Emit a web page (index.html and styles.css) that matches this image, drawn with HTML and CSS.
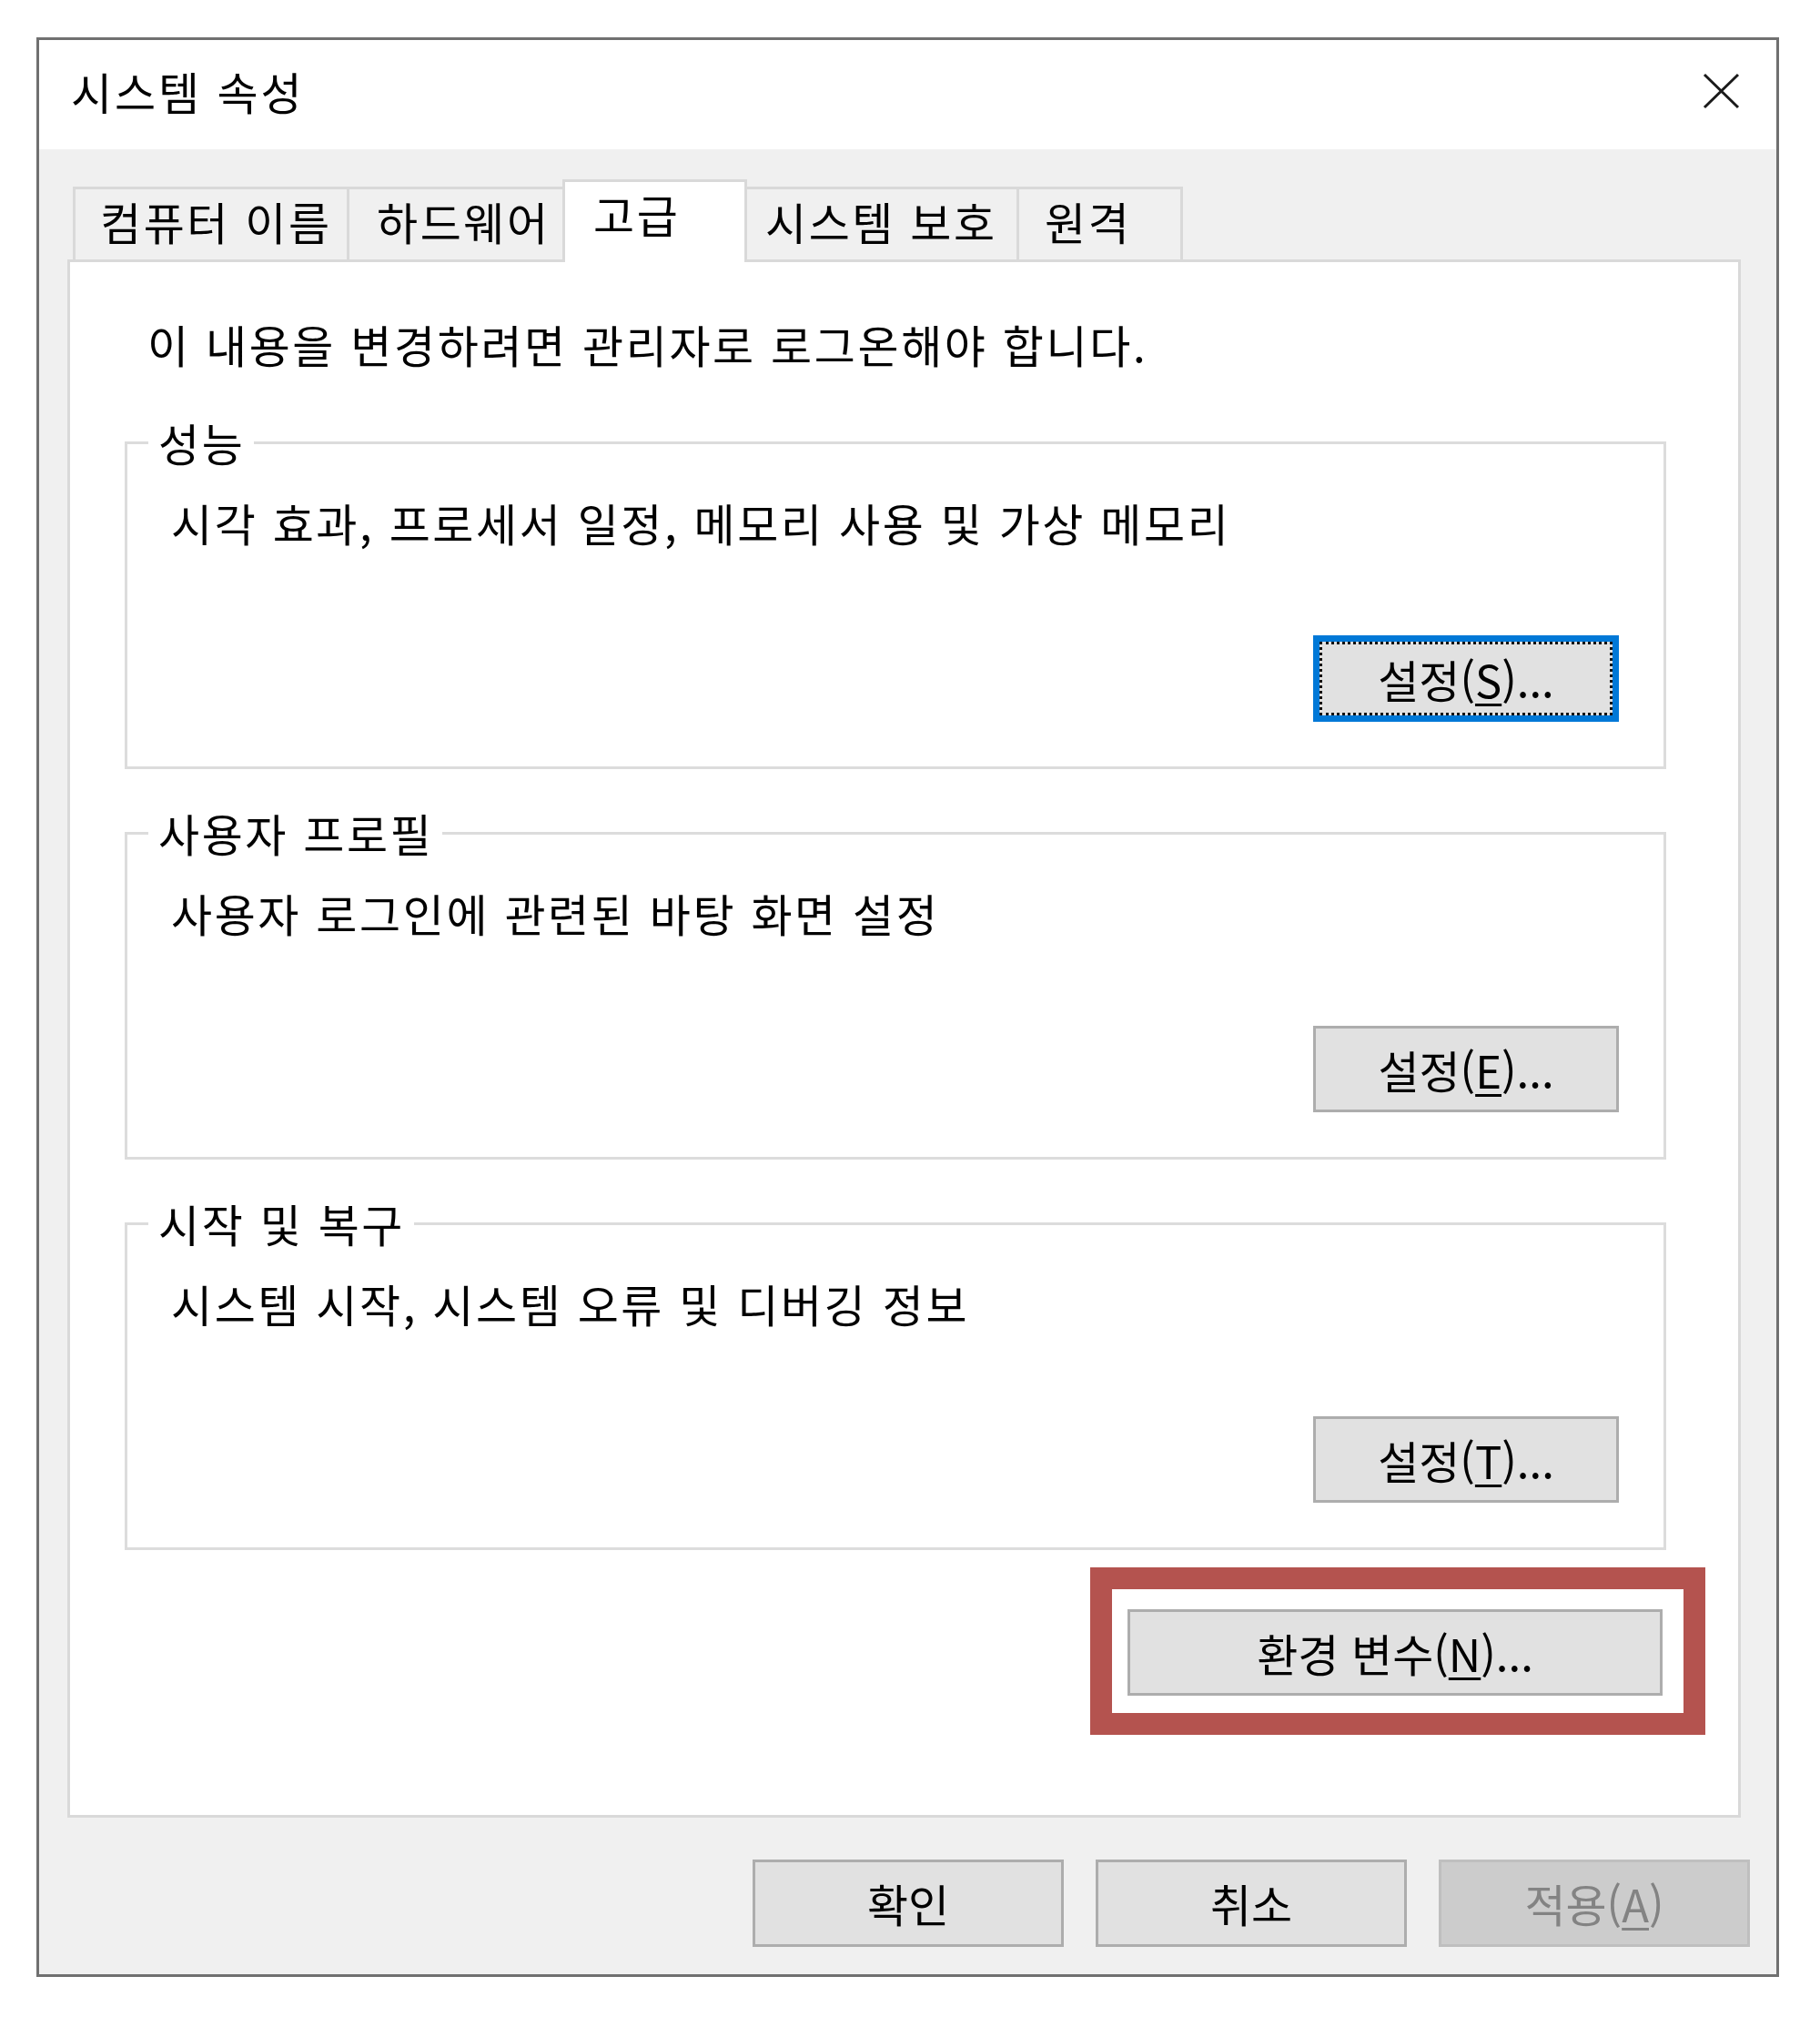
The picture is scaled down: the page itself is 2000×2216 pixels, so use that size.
FILE: index.html
```html
<!DOCTYPE html>
<html lang="ko">
  <head>
    <meta charset="UTF-8" />
    <meta name="viewport" content="width=device-width, initial-scale=1.0" />
    <title>시스템 속성</title>
    <link rel="stylesheet" href="styles.css">
  </head>
  <body>
    <div class="window">
      <div class="titlebar">
        <span class="title">시스템 속성</span>
        <svg class="close" width="41" height="40" viewBox="0 0 41 40">
          <path d="M2 2 L39 38 M39 2 L2 38" stroke="#1a1a1a" stroke-width="3" fill="none" />
        </svg>
      </div>
      <div class="body">
        <div class="tabs">
          <div class="tab t1">컴퓨터 이름</div>
          <div class="tab t2">하드웨어</div>
          <div class="tab t3 active">고급</div>
          <div class="tab t4">시스템 보호</div>
          <div class="tab t5">원격</div>
        </div>
        <div class="panel">
          <p class="notice">이 내용을 변경하려면 관리자로 로그온해야 합니다.</p>
          <fieldset class="group">
            <legend>성능</legend>
            <p class="desc">시각 효과, 프로세서 일정, 메모리 사용 및 가상 메모리</p>
            <div class="actions">
              <button class="btn focused">설정(<u>S</u>)...</button>
            </div>
          </fieldset>
          <fieldset class="group">
            <legend>사용자 프로필</legend>
            <p class="desc">사용자 로그인에 관련된 바탕 화면 설정</p>
            <div class="actions">
              <button class="btn">설정(<u>E</u>)...</button>
            </div>
          </fieldset>
          <fieldset class="group">
            <legend>시작 및 복구</legend>
            <p class="desc">시스템 시작, 시스템 오류 및 디버깅 정보</p>
            <div class="actions">
              <button class="btn">설정(<u>T</u>)...</button>
            </div>
          </fieldset>
          <div class="env-row">
            <div class="highlight">
              <button class="btn wide">환경 변수(<u>N</u>)...</button>
            </div>
          </div>
        </div>
        <div class="footer">
          <button class="btn">확인</button>
          <button class="btn">취소</button>
          <button class="btn" disabled>적용(<u>A</u>)</button>
        </div>
      </div>
    </div>
  </body>
</html>
```

FILE: styles.css
```css
* {
  padding: 0;
  margin: 0;
  box-sizing: border-box;
}
body {
  background: #fff;
  font-family: "Noto Sans CJK KR", "Malgun Gothic", sans-serif;
  font-size: 49px;
  line-height: 60px;
  letter-spacing: 2.6px;
  color: #000;
}
.window {
  margin: 41px 0 0 40px;
  width: 1915px;
  height: 2131px;
  border: 3px solid #707070;
  display: flex;
  flex-direction: column;
}
.titlebar {
  height: 120px;
  background: #fff;
  display: flex;
  justify-content: space-between;
  align-items: flex-start;
  padding: 26px 40px 0 35px;
}
.title {
  letter-spacing: 2.9px;
}
.close {
  margin-top: 10px;
}
.body {
  flex: 1;
  background: #f0f0f0;
  padding: 33px 29px 0 31px;
  display: flex;
  flex-direction: column;
}
.tabs {
  height: 88px;
  display: flex;
  align-items: flex-end;
  padding-left: 6px;
}
.tab {
  height: 80px;
  padding: 5px 0 0 27px;
  background: #f0f0f0;
  border: 3px solid #d9d9d9;
  border-bottom: none;
  border-right: none;
  white-space: nowrap;
}
.tab.t1 { width: 301px; }
.tab.t2 { width: 237px; padding-left: 30px; }
.tab.t3 { width: 203px; padding-left: 31px; }
.tab.t4 { width: 296px; padding-left: 20px; }
.tab.t5 { width: 183px; padding-left: 28px; border-right: 3px solid #d9d9d9; }
.tab.active {
  height: 91px;
  margin-bottom: -3px;
  background: #fff;
  border-right: 3px solid #d9d9d9;
  position: relative;
  z-index: 1;
}
.tab.active + .tab {
  border-left: none;
}
.panel {
  height: 1712px;
  margin-right: 10px;
  background: #fff;
  border: 3px solid #d9d9d9;
  padding: 60px 36px 0 60px;
}
.notice {
  margin-left: 25px;
}
.group {
  margin: 48px 43px 0 0;
  height: 389px;
  border: 3px solid #dcdcdc;
  padding: 0 49px 49px 23px;
}
.group + .group {
  margin-top: 40px;
}
.group legend {
  padding: 0 10px 0 11px;
}
.desc {
  margin: 28px 0 0 25px;
}
.actions {
  margin-top: 94px;
  display: flex;
  justify-content: flex-end;
}
.btn {
  font-family: inherit;
  font-size: 49px;
  line-height: 60px;
  letter-spacing: 0;
  color: #000;
  width: 336px;
  height: 95px;
  background: #e1e1e1;
  border: 3px solid #adadad;
}
.btn u {
  text-underline-offset: 6px;
  text-decoration-thickness: 3px;
}
.btn.focused {
  border: 7px solid #0078d7;
  outline: 3px dotted #111;
  outline-offset: -10px;
}
.btn:disabled {
  background: #cccccc;
  border-color: #bfbfbf;
  color: #838383;
}
.env-row {
  display: flex;
  justify-content: flex-end;
  margin-top: 19px;
}
.highlight {
  width: 676px;
  height: 184px;
  border: 24px solid #b4534f;
  background: #fff;
  padding: 22px 23px 0 17px;
}
.btn.wide {
  width: 588px;
}
.footer {
  margin-top: 46px;
  display: flex;
  justify-content: flex-end;
  gap: 35px;
}
.footer .btn {
  width: 342px;
  height: 96px;
}
```
